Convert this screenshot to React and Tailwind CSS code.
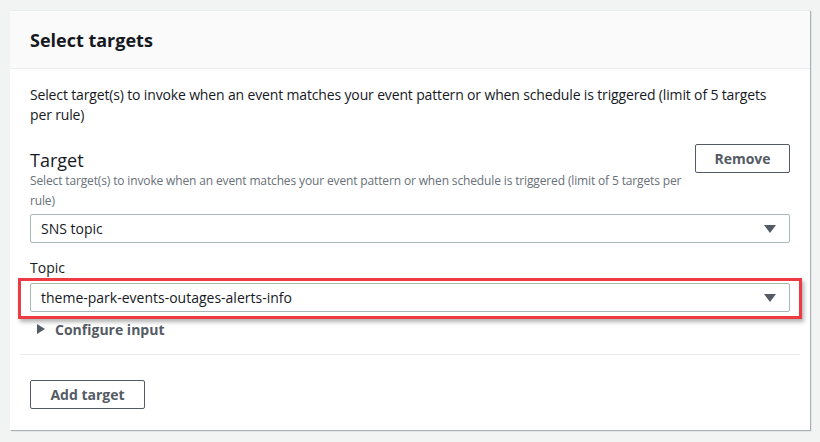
export default function App() {
  return (
    <div className="w-[820px] h-[442px] bg-[#f2f3f3] pt-[10px] pl-[10px] font-['Open_Sans',sans-serif] text-[#16191f]">
      <div className="w-[800px] h-[420px] bg-white border-t border-[#eaeded] shadow-[1px_1px_1px_0_rgba(0,28,36,0.3)] flex flex-col">
        <div className="h-[58px] bg-[#fafafa] border-b border-[#eaeded] px-[20px] flex items-center">
          <h2 className="text-[18px] font-bold leading-none">Select targets</h2>
        </div>
        <div className="px-[20px] pt-[16px]">
          <p className="text-[14px] leading-[20px] tracking-[-0.15px]">
            Select target(s) to invoke when an event matches your event pattern or when schedule is triggered (limit of 5 targets per rule)
          </p>
          <div className="flex items-start justify-between mt-[24px]">
            <div>
              <div className="text-[18px] leading-[22px]">Target</div>
              <div className="text-[12px] leading-[20px] text-[#687078] tracking-[-0.14px] w-[660px]">
                Select target(s) to invoke when an event matches your event pattern or when schedule is triggered (limit of 5 targets per rule)
              </div>
            </div>
            <button className="w-[95px] h-[29px] border border-[#545b64] rounded-[2px] text-[14px] font-bold text-[#545b64] -mt-[5px]">
              Remove
            </button>
          </div>
          <div className="mt-[3px] h-[29px] border border-[#aab7b8] rounded-[2px] flex items-center justify-between pl-[10px] pr-[13px] text-[14px]">
            <span>SNS topic</span>
            <svg width="12" height="8" viewBox="0 0 12 8"><path d="M0 0h12L6 8z" fill="#545b64" /></svg>
          </div>
          <div className="mt-[15px] text-[14px] leading-[20px]">Topic</div>
          <div className="-mx-[12px] px-[9px] pt-[2px] pb-[4px] border-[3px] border-[#ee3a43] shadow-[2px_3px_4px_rgba(0,0,0,0.3)]">
            <div className="h-[29px] border border-[#aab7b8] rounded-[2px] flex items-center justify-between pl-[10px] pr-[13px] text-[14px]">
              <span>theme-park-events-outages-alerts-info</span>
              <svg width="12" height="8" viewBox="0 0 12 8"><path d="M0 0h12L6 8z" fill="#545b64" /></svg>
            </div>
          </div>
          <div className="flex items-center gap-[10px] pl-[7px] h-[20px] text-[14px] font-bold text-[#545b64]">
            <svg width="8" height="10" viewBox="0 0 8 10"><path d="M0 0l8 5-8 5z" fill="#545b64" /></svg>
            <span>Configure input</span>
          </div>
        </div>
        <div className="mx-[10px] mt-[15px] border-t border-[#eaeded]" />
        <div className="px-[20px] pt-[25px]">
          <button className="w-[115px] h-[29px] border border-[#545b64] rounded-[2px] text-[14px] font-bold text-[#545b64]">
            Add target
          </button>
        </div>
      </div>
    </div>
  );
}
